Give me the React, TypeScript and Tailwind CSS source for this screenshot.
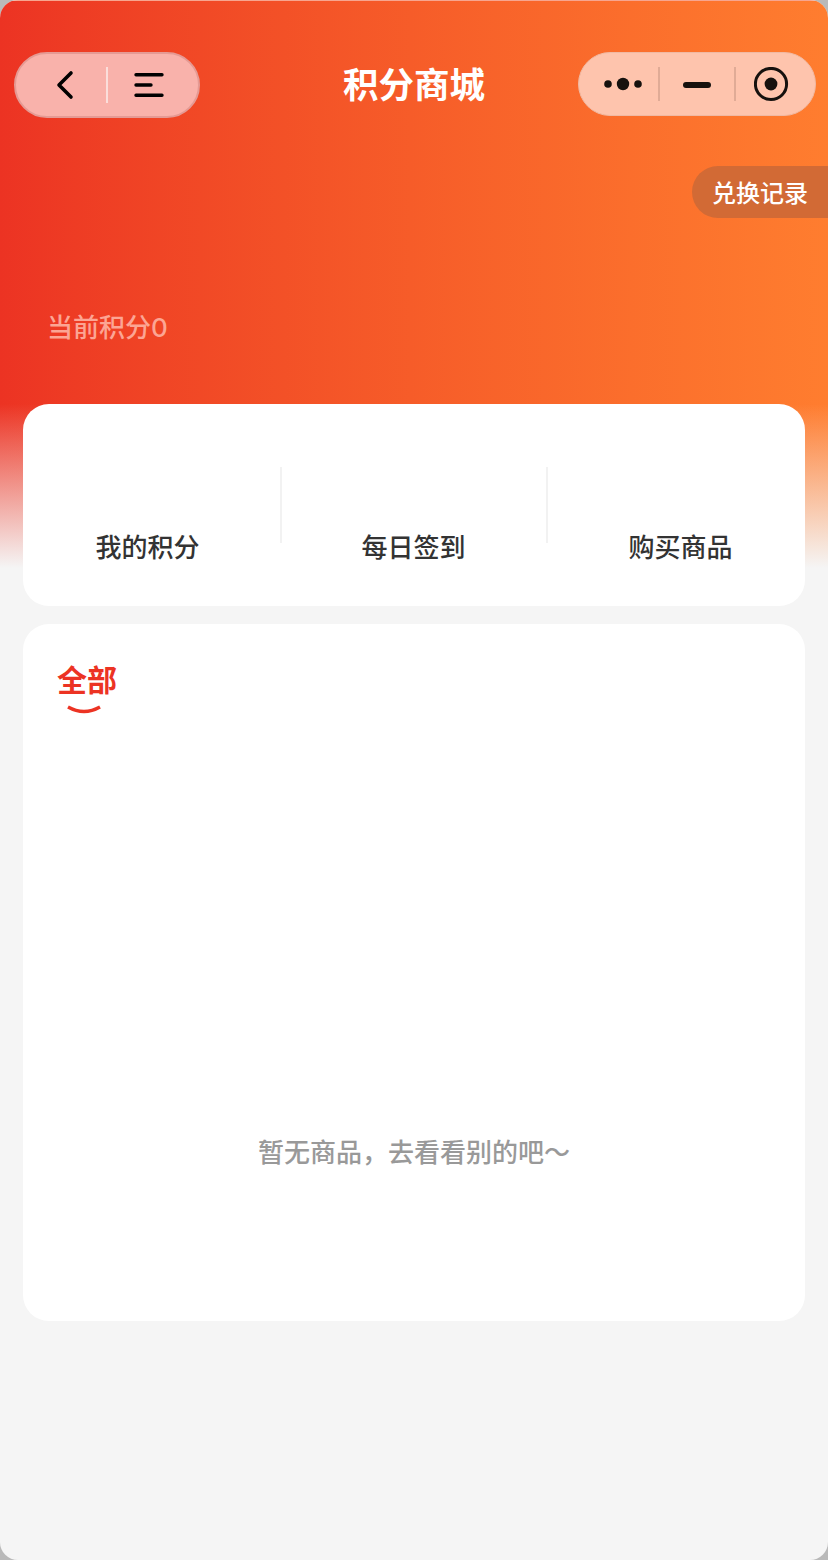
const FONT = '"PingFang SC", "Noto Sans CJK SC", "Noto Sans", sans-serif'

const ENTRIES = ['我的积分', '每日签到', '购买商品']

function NavLeft() {
  return (
    <div className="flex h-[66px] w-[186px] items-center rounded-full border-2 border-[#e59a94] bg-[#f9b2ab]">
      <div className="flex w-[90px] justify-end pr-[31px]">
        <svg width="20" height="30" viewBox="0 0 20 30" fill="none" stroke="#000" strokeWidth="3.6" strokeLinecap="round" strokeLinejoin="round">
          <path d="M16 3 L4 15 L16 27" />
        </svg>
      </div>
      <div className="h-[36px] w-[2px] bg-[#fbdedb]" />
      <div className="flex flex-1 pb-[1px] pl-[26px]">
        <svg width="30" height="28" viewBox="0 0 30 28" fill="none" stroke="#000" strokeWidth="3.4" strokeLinecap="round">
          <path d="M2 3.7 H28 M2 14 H17 M2 24.3 H28" />
        </svg>
      </div>
    </div>
  )
}

function NavRight() {
  return (
    <div className="flex h-[64px] w-[238px] items-center rounded-full border border-[#f0b9a3] bg-[#fec4ad]">
      <div className="flex w-[79px] justify-end pr-[16px]">
        <svg width="38" height="14" viewBox="0 0 38 14" fill="#16110e">
          <circle cx="4" cy="7" r="3.8" />
          <circle cx="19" cy="7" r="6.2" />
          <circle cx="34" cy="7" r="3.8" />
        </svg>
      </div>
      <div className="h-[34px] w-[2px] bg-[#e0ab96]" />
      <div className="flex w-[74px] justify-center pt-[2px]">
        <svg width="28" height="6" viewBox="0 0 28 6" fill="#16110e">
          <rect width="28" height="6" rx="3" />
        </svg>
      </div>
      <div className="h-[34px] w-[2px] bg-[#e0ab96]" />
      <div className="flex flex-1 pl-[18px] pt-[2px]">
        <svg width="36" height="36" viewBox="0 0 36 36">
          <circle cx="17" cy="17" r="15.6" fill="none" stroke="#16110e" strokeWidth="3" />
          <circle cx="17" cy="17" r="6.4" fill="#16110e" />
        </svg>
      </div>
    </div>
  )
}

export default function App() {
  return (
    <div className="h-[1560px] w-[828px] bg-[#b9b9b9]" style={{ fontFamily: FONT }}>
      <div className="relative h-[1560px] overflow-hidden rounded-[18px] bg-[#f5f5f5]">
        {/* header background fades out behind the first card */}
        <div className="absolute inset-x-0 top-0 h-[568px] border-t border-[#f7a58f] bg-gradient-to-r from-[#ec3323] to-[#ff7d2f]">
          <div className="absolute inset-x-0 bottom-0 h-[164px] bg-gradient-to-b from-transparent to-[#f5f5f5]" />
        </div>

        <div className="relative">
          <div className="flex items-start justify-between pl-[14px] pr-[12px] pt-[52px]">
            <NavLeft />
            <NavRight />
          </div>
          <h1 className="absolute left-0 right-0 top-[58px] text-center text-[35.5px] font-bold leading-[50px] text-white">积分商城</h1>

          <div className="mt-[48px] flex justify-end">
            <div className="flex h-[52px] w-[136px] items-center rounded-l-full bg-[#d26a35] pl-[20px] text-[24px] font-medium leading-none text-white">
              兑换记录
            </div>
          </div>

          <p className="ml-[47px] mt-[90px] text-[26px] font-medium leading-[36px] text-[#fca594]">
            当前积分<span className="font-[Inter] font-medium">0</span>
          </p>

          <section className="mx-[23px] mt-[58px] h-[202px] rounded-[26px] bg-white pt-[63px]">
            <div className="-ml-[7px] -mr-[9px] grid grid-cols-3">
              {ENTRIES.map((label, i) => (
                <div key={label} className={`flex h-[76px] items-end justify-center ${i < 2 ? 'border-r-2 border-[#f2f2f2]' : ''}`}>
                  <span className="-mb-[21px] -ml-[1px] text-[26px] font-medium leading-[36px] text-[#333333]">{label}</span>
                </div>
              ))}
            </div>
          </section>

          <section className="mx-[23px] mt-[18px] h-[697px] rounded-[26px] bg-white pl-[34px] pt-[34px]">
            <div className="w-[60px]">
              <div className="text-[30px] font-semibold leading-[40px] text-[#ec3323]">全部</div>
              <svg className="ml-[9px] mt-[7px]" width="36" height="12" viewBox="0 0 36 12" fill="none" stroke="#ec3323" strokeWidth="3.4">
                <path d="M2 2 Q18 11 34 2" />
              </svg>
            </div>
            <p className="-ml-[34px] mt-[416px] text-center text-[26px] font-medium leading-[36px] text-[#999999]">暂无商品，去看看别的吧～</p>
          </section>
        </div>
      </div>
    </div>
  )
}
